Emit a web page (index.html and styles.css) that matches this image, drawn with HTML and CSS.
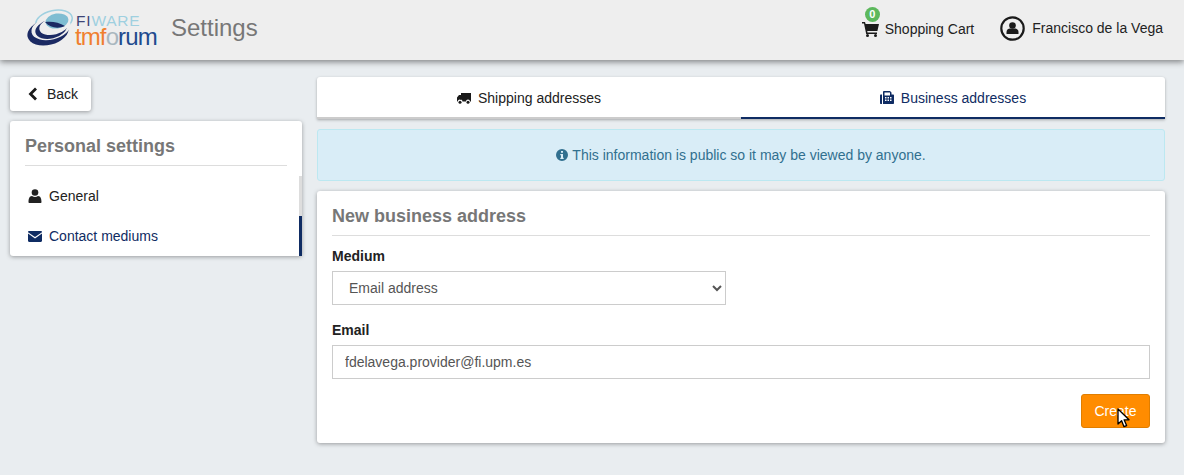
FILE: index.html
```html
<!DOCTYPE html>
<html lang="en">
<head>
<meta charset="utf-8">
<title>Settings</title>
<link rel="stylesheet" href="styles.css">
</head>
<body>
<header class="topbar">
  <div class="brand">
    <svg class="logo" width="134" height="38" viewBox="0 0 134 38">
      <ellipse cx="27" cy="12" rx="18.5" ry="10.5" transform="rotate(-12 27 12)" fill="none" stroke="#9fd0e0" stroke-width="1.5"/>
      <ellipse cx="21" cy="23" rx="21" ry="13" transform="rotate(-14 21 23)" fill="#1b2a63"/>
      <ellipse cx="24" cy="19" rx="20" ry="11.5" transform="rotate(-14 24 19)" fill="#eeeeee"/>
      <ellipse cx="24" cy="20" rx="16" ry="9.5" transform="rotate(-14 24 20)" fill="#1b2a63"/>
      <ellipse cx="27" cy="17" rx="15" ry="8.5" transform="rotate(-14 27 17)" fill="#eeeeee"/>
      <ellipse cx="30" cy="12" rx="11.5" ry="7.5" transform="rotate(-8 30 12)" fill="#7fbdd2"/>
      <path d="M18 13 C24 12 32 13 38 17 C31 20 23 19 18 13Z" fill="#1b2a63"/>
      <text class="logo-fi" x="49" y="17">FI<tspan class="logo-ware">WARE</tspan></text>
      <text class="logo-tm" x="48" y="36">tmf<tspan class="logo-o">o</tspan><tspan class="logo-rum">rum</tspan></text>
    </svg>
    <h1 class="title">Settings</h1>
  </div>
  <nav class="usernav">
    <a class="navlink cart">
      <span class="badge">0</span>
      <svg class="ico" width="17" height="15" viewBox="0 0 17 15"><path d="M0 0h3l.6 2H17l-1.6 7H5.2l.3 1.4H15V12H4.2L2 1.6H0Z" fill="#1a1a1a"/><circle cx="5.5" cy="13.5" r="1.5" fill="#1a1a1a"/><circle cx="13.5" cy="13.5" r="1.5" fill="#1a1a1a"/></svg>
      <span>Shopping Cart</span>
    </a>
    <a class="navlink user">
      <svg width="25" height="25" viewBox="0 0 25 25"><circle cx="12.5" cy="12.5" r="11.2" fill="none" stroke="#1a1a1a" stroke-width="2.2"/><circle cx="12.5" cy="9.5" r="3.3" fill="#1a1a1a"/><path d="M6.5 18v-2c0-2.500 2-3.500 3.500-3.500h5c1.500 0 3.500 1 3.500 3.500v2Z" fill="#1a1a1a"/></svg>
      <span>Francisco de la Vega</span>
    </a>
  </nav>
</header>

<main class="layout">
  <aside class="side">
    <a class="backbtn">
      <svg width="10" height="14" viewBox="0 0 10 14"><path d="M8 1.500 2.500 7 8 12.500" fill="none" stroke="#1a1a1a" stroke-width="2.800"/></svg>
      <span>Back</span>
    </a>
    <section class="panel sidepanel">
      <div class="panel-head"><h2 class="heading">Personal settings</h2></div>
      <a class="sideitem">
        <svg class="sideico" width="13" height="14" viewBox="0 0 13 14"><circle cx="6.500" cy="3.500" r="3.300" fill="currentColor"/><path d="M1 14c-.6 0-1-.4-1-1 0-3 .8-6 3.500-6 1 .7 2 1 3 1s2-.3 3-1C12.200 7 13 10 13 13c0 .6-.4 1-1 1Z" fill="currentColor"/></svg>
        <span>General</span>
      </a>
      <a class="sideitem active">
        <svg class="sideico" width="14" height="11" viewBox="0 0 14 11"><path d="M0 1.200C0 .5.500 0 1.200 0h11.600c.7 0 1.200.5 1.200 1.200L7 6 0 1.200Z" fill="currentColor"/><path d="M0 2.600V9.800c0 .7.500 1.200 1.200 1.200h11.600c.7 0 1.200-.5 1.200-1.200V2.600L7 7.400Z" fill="currentColor"/></svg>
        <span>Contact mediums</span>
      </a>
    </section>
  </aside>

  <div class="content">
    <nav class="tabs">
      <a class="tab">
        <svg width="14" height="11" viewBox="0 0 14 11"><path d="M5 0h9v8.500h-1a2 2 0 0 0-4 0H5.500a2 2 0 0 0-1.500-1.900V0Z" fill="#1a1a1a"/><path d="M4 2H2L0 4.500V8.500h.7a2 2 0 0 1 3.300-1.500Z" fill="#1a1a1a"/><circle cx="3" cy="9.200" r="1.500" fill="#1a1a1a"/><circle cx="11" cy="9.200" r="1.500" fill="#1a1a1a"/></svg>
        <span>Shipping addresses</span>
      </a>
      <a class="tab active">
        <svg width="14" height="14" viewBox="0 0 14 14"><path d="M0 4.500C0 4 .4 3.500 1 3.500h1V13H1c-.6 0-1-.4-1-1Z" fill="currentColor"/><path fill-rule="evenodd" d="M3 13V1c0-.5.500-1 1-1h6l1.500 1.500v2H13c.6 0 1 .4 1 1V12c0 .6-.4 1-1 1ZM4.500 1.500v3h5.500v-3ZM5 6v1.500h1.500V6Zm2.500 0v1.500H9V6ZM10 6v1.500h1.500V6ZM5 8.500V10h1.500V8.500Zm2.500 0V10H9V8.500Zm2.500 0V10h1.500V8.500Z" fill="currentColor"/></svg>
        <span>Business addresses</span>
      </a>
    </nav>

    <div class="alert">
      <svg width="12" height="12" viewBox="0 0 12 12"><path fill-rule="evenodd" d="M6 0a6 6 0 1 1 0 12A6 6 0 0 1 6 0ZM5 2v1.700h2V2ZM4.300 5v1.200H5v2.600h-.7V10h3.400V8.800H7V5Z" fill="currentColor"/></svg>
      <span>This information is public so it may be viewed by anyone.</span>
    </div>

    <section class="panel formpanel">
      <div class="panel-head"><h2 class="heading">New business address</h2></div>
      <form class="form">
        <label class="field-label" for="medium">Medium</label>
        <select class="control select" id="medium">
          <option>Email address</option>
        </select>
        <label class="field-label email-label" for="email">Email</label>
        <input class="control" id="email" type="text" value="fdelavega.provider@fi.upm.es">
        <div class="actions">
          <button class="create" type="button">Create</button>
          <svg class="pointer" width="13" height="20" viewBox="0 0 13 20"><path d="M1 1v15l3.600-3.300 2.400 6 2.600-1.100-2.500-5.800H12Z" fill="#fff" stroke="#000" stroke-width="1.300" stroke-linejoin="round"/></svg>
        </div>
      </form>
    </section>
  </div>
</main>
</body>
</html>
```
FILE: styles.css
```css
* { box-sizing: border-box; }
html, body { height: 100%; }
body {
  margin: 0;
  background: #e9edf0;
  font-family: "Liberation Sans", Arial, sans-serif;
  font-size: 14px;
  line-height: 20px;
  color: #222;
  overflow: hidden;
}
a { color: inherit; text-decoration: none; }

.topbar {
  height: 60px;
  padding: 0 21px 4px 27px;
  background: #eeeeee;
  box-shadow: 0 2px 6px rgba(0, 0, 0, .45);
  display: flex;
  align-items: center;
  justify-content: space-between;
}
.brand { display: flex; align-items: center; gap: 10px; }
.logo { display: block; }
.logo-fi { font-size: 15.500px; fill: #3d4577; letter-spacing: .8px; }
.logo-ware { fill: #9fd0e0; }
.logo-tm { font-size: 24px; fill: #f07f2e; letter-spacing: -.9px; }
.logo-o { fill: #a9b7bf; }
.logo-rum { fill: #1f4a8e; }
.title { margin: 0; font-size: 24px; font-weight: 400; line-height: 30px; color: #777; }

.usernav { display: flex; align-items: center; gap: 26px; }
.navlink { display: flex; align-items: center; color: #222; position: relative; }
.cart { gap: 6px; margin-top: 2px; }
.cart .ico { margin-top: 0; }
.user { gap: 7px; }
.badge {
  position: absolute;
  left: 3px;
  top: -12px;
  width: 15px;
  height: 15px;
  border-radius: 50%;
  background: #5cb85c;
  color: #fff;
  font-size: 11px;
  font-weight: 700;
  line-height: 15px;
  text-align: center;
}

.layout {
  display: flex;
  align-items: flex-start;
  gap: 15px;
  padding: 17px 19px 0 10px;
}
.side { width: 292px; flex: none; display: flex; flex-direction: column; align-items: flex-start; gap: 10px; }
.content { flex: 1; min-width: 0; display: flex; flex-direction: column; gap: 10px; }

.backbtn {
  height: 34px;
  width: 81px;
  padding-left: 18px;
  display: flex;
  align-items: center;
  gap: 9px;
  background: #fff;
  border-radius: 3px;
  box-shadow: 0 1px 4px rgba(0, 0, 0, .35);
}

.panel {
  background: #fff;
  border-radius: 3px;
  box-shadow: 0 1px 4px rgba(0, 0, 0, .35);
}
.sidepanel { width: 100%; padding-top: 15px; }
.panel-head { margin: 0 15px; padding-bottom: 9px; border-bottom: 1px solid #ddd; }
.heading { margin: 0; font-size: 18px; font-weight: 700; line-height: 20px; color: #777; }

.sidepanel .panel-head { margin-bottom: 10px; }
.sideitem {
  height: 40px;
  padding-left: 18px;
  display: flex;
  align-items: center;
  border-right: 3px solid #ddd;
  color: #222;
}
.sideico { width: 14px; margin-right: 7px; flex: none; }
.sideitem.active { color: #0f2c63; border-right-color: #0f2c63; }

.tabs {
  display: flex;
  background: #fff;
  border-radius: 3px 3px 0 0;
  box-shadow: 0 1px 3px rgba(0, 0, 0, .3);
}
.tab {
  flex: 1;
  height: 42px;
  display: flex;
  align-items: center;
  justify-content: center;
  gap: 7px;
  border-bottom: 2px solid #ccc;
  padding-top: 2px;
}
.tab.active { color: #0f2c63; border-bottom-color: #0f2c63; }

.alert {
  height: 52px;
  display: flex;
  align-items: center;
  justify-content: center;
  gap: 4px;
  background: #d9edf7;
  border: 1px solid #bce8f1;
  border-radius: 3px;
  color: #31708f;
}

.formpanel { padding: 15px 0; }
.form { padding: 10px 15px 0; display: flex; flex-direction: column; align-items: stretch; }
.field-label { font-weight: 700; margin-bottom: 5px; color: #222; }
.email-label { margin-top: 15px; }
.control {
  height: 34px;
  width: 100%;
  padding: 0 12px;
  font: inherit;
  color: #555;
  background: #fff;
  border: 1px solid #ccc;
  border-radius: 0;
  outline: none;
}
.select { width: 394px; }
.actions { margin-top: 15px; display: flex; justify-content: flex-end; position: relative; }
.create {
  width: 69px;
  height: 34px;
  padding: 0;
  font: inherit;
  color: #fff;
  background: #ff8c00;
  border: 1px solid #e07e00;
  border-radius: 3px;
}
.pointer { position: absolute; right: 20px; top: 14px; }
```
